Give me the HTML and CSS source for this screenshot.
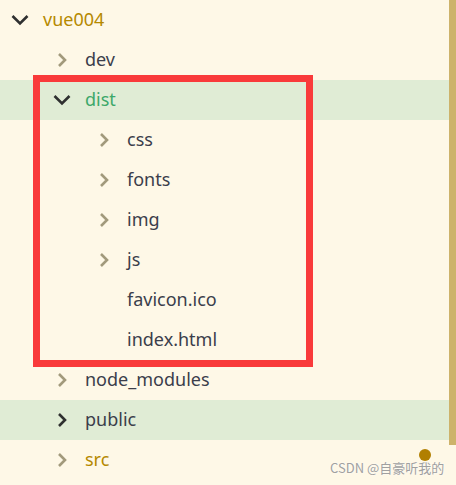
FILE: index.html
```html
<!DOCTYPE html>
<html>
<head>
<meta charset="utf-8">
<link rel="stylesheet" href="styles.css">
</head>
<body>
<div class="page">
  <div class="tree">
    <div class="row lvl0 folder-root">
      <svg class="chev open" viewBox="0 0 16 16"><path d="M0.5 4 L8 11.5 L15.5 4"/></svg>
      <span class="label">vue004</span>
    </div>
    <div class="row lvl1">
      <svg class="chev" viewBox="0 0 16 16"><path d="M5 2 L11 8 L5 14"/></svg>
      <span class="label">dev</span>
    </div>
    <div class="row lvl1 hl">
      <svg class="chev open dark" viewBox="0 0 16 16"><path d="M0.5 4 L8 11.5 L15.5 4"/></svg>
      <span class="label green">dist</span>
    </div>
    <div class="row lvl2">
      <svg class="chev" viewBox="0 0 16 16"><path d="M5 2 L11 8 L5 14"/></svg>
      <span class="label">css</span>
    </div>
    <div class="row lvl2">
      <svg class="chev" viewBox="0 0 16 16"><path d="M5 2 L11 8 L5 14"/></svg>
      <span class="label">fonts</span>
    </div>
    <div class="row lvl2">
      <svg class="chev" viewBox="0 0 16 16"><path d="M5 2 L11 8 L5 14"/></svg>
      <span class="label">img</span>
    </div>
    <div class="row lvl2">
      <svg class="chev" viewBox="0 0 16 16"><path d="M5 2 L11 8 L5 14"/></svg>
      <span class="label">js</span>
    </div>
    <div class="row lvl2">
      <span class="chev-space"></span>
      <span class="label">favicon.ico</span>
    </div>
    <div class="row lvl2">
      <span class="chev-space"></span>
      <span class="label">index.html</span>
    </div>
    <div class="row lvl1">
      <svg class="chev" viewBox="0 0 16 16"><path d="M5 2 L11 8 L5 14"/></svg>
      <span class="label">node_modules</span>
    </div>
    <div class="row lvl1 hl">
      <svg class="chev dark" viewBox="0 0 16 16"><path d="M5 2 L11 8 L5 14"/></svg>
      <span class="label">public</span>
    </div>
    <div class="row lvl1">
      <svg class="chev" viewBox="0 0 16 16"><path d="M5 2 L11 8 L5 14"/></svg>
      <span class="label yellow">src</span>
    </div>
  </div>
  <div class="scrollbar"></div>
  <div class="redbox"></div>
  <div class="dot"></div>
  <div class="watermark">CSDN @自豪听我的</div>
</div>
</body>
</html>
```

FILE: styles.css
```css
html, body {
  margin: 0;
  padding: 0;
  background: #fef8e7;
}
.page {
  position: relative;
  width: 456px;
  height: 485px;
  display: flex;
  align-items: flex-start;
  overflow: hidden;
  font-family: "Noto Sans", "Noto Sans CJK SC", sans-serif;
}
.tree {
  width: 449px;
  display: flex;
  flex-direction: column;
}
.row {
  height: 40px;
  display: flex;
  align-items: center;
  gap: 15px;
  font-size: 18px;
  color: #3b3e4b;
}
.lvl0 { padding-left: 12px; }
.lvl1 { padding-left: 54px; }
.lvl2 { padding-left: 96px; }
.hl { background: #e0ecd5; }
.chev {
  width: 16px;
  height: 16px;
  flex: none;
  fill: none;
  stroke: #a29a7c;
  stroke-width: 2.6;
  overflow: visible;
}
.chev.open { stroke: #2f3030; }
.chev.dark { stroke: #2f3030; }
.chev-space {
  width: 16px;
  height: 16px;
  flex: none;
}
.label {
  line-height: 24px;
  position: relative;
  top: -1px;
}
.folder-root .label { color: #b58900; }
.green { color: #3da86a; }
.yellow { color: #b58900; }
.scrollbar {
  width: 7px;
  height: 445px;
  background: #cdb36b;
}
.redbox {
  position: absolute;
  left: 33px;
  top: 75px;
  width: 266px;
  height: 278px;
  border: 7px solid #f93a3a;
}
.dot {
  position: absolute;
  left: 419px;
  top: 449px;
  width: 12px;
  height: 12px;
  border-radius: 50%;
  background: #b17f00;
}
.watermark {
  position: absolute;
  left: 330px;
  top: 459px;
  font-size: 13px;
  line-height: 18px;
  color: #a0a0a0;
  font-family: "Noto Sans CJK SC", "Noto Sans", sans-serif;
  text-shadow: 0 0 2px #fff;
}
```
